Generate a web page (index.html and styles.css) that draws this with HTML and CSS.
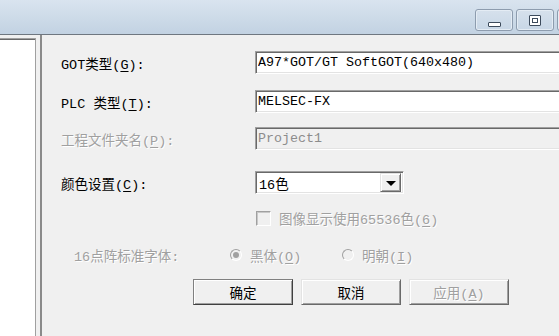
FILE: index.html
```html
<!DOCTYPE html>
<html lang="zh-CN">
<head>
  <meta charset="UTF-8">
  <meta name="viewport" content="width=device-width, initial-scale=1.0">
  <title>工程设置</title>
  <link rel="stylesheet" href="styles.css">
</head>
<body>
  <header class="titlebar">
    <div class="caption-buttons">
      <button class="cap-btn" type="button"><span class="ico-min"></span></button>
      <button class="cap-btn" type="button"><span class="ico-max"></span></button>
      <button class="cap-btn" type="button"></button>
    </div>
  </header>
  <main class="workspace">
    <div class="tree-pane"></div>
    <div class="splitter"></div>
    <form class="dialog">
      <div class="row row-got">
        <label class="label">GOT类型(<u>G</u>):</label>
        <input class="field" value="A97*GOT/GT SoftGOT(640x480)" readonly>
      </div>
      <div class="row row-plc">
        <label class="label">PLC 类型(<u>T</u>):</label>
        <input class="field" value="MELSEC-FX" readonly>
      </div>
      <div class="row row-folder">
        <label class="label disabled">工程文件夹名(<u>P</u>):</label>
        <input class="field field-disabled" value="Project1" disabled>
      </div>
      <div class="row row-color">
        <label class="label">颜色设置(<u>C</u>):</label>
        <div class="combo">
          <span class="combo-text">16色</span>
          <span class="combo-btn"><span class="arrow"></span></span>
        </div>
      </div>
      <div class="row row-check">
        <span class="check"></span>
        <span class="disabled">图像显示使用65536色(<u>6</u>)</span>
      </div>
      <div class="row row-font">
        <span class="label-font disabled">16点阵标准字体:</span>
        <span class="radio checked"></span>
        <span class="disabled radio-text">黑体(<u>O</u>)</span>
        <span class="radio"></span>
        <span class="disabled">明朝(<u>I</u>)</span>
      </div>
      <div class="row row-buttons">
        <button class="btn btn-default" type="button">确定</button>
        <button class="btn" type="button">取消</button>
        <button class="btn disabled" type="button" disabled>应用(<u>A</u>)</button>
      </div>
    </form>
  </main>
</body>
</html>
```

FILE: styles.css
```css
body {
  margin: 0;
  width: 559px;
  height: 336px;
  overflow: hidden;
  background: #f0f0f0;
  font-family: "Liberation Mono", "Noto Sans CJK SC", monospace;
  font-size: 13.5px;
  color: #000;
}
.titlebar {
  height: 34px;
  border-bottom: 1px solid #6f7780;
  background: linear-gradient(#d9e4ef, #c2d2e2);
  display: flex;
  overflow: hidden;
}
.caption-buttons {
  margin-left: auto;
  margin-right: -36px;
  padding-top: 9px;
  display: flex;
  gap: 3px;
}
.cap-btn {
  width: 38px;
  height: 22px;
  padding: 0;
  border: 1px solid #8d9cae;
  border-radius: 3px;
  background: linear-gradient(#d6e1ec, #c8d7e6);
  box-shadow: inset 0 0 0 1px #e4ecf4;
  display: flex;
  align-items: center;
  justify-content: center;
}
.ico-min {
  width: 11px;
  height: 3px;
  margin-top: 8px;
  border: 1px solid #3d4b5c;
  border-radius: 1px;
  background: #fff;
}
.ico-max {
  width: 10px;
  height: 9px;
  border: 1px solid #3d4b5c;
  border-radius: 1px;
  background: #fff;
  position: relative;
}
.ico-max::after {
  content: "";
  position: absolute;
  left: 2px;
  top: 2px;
  width: 4px;
  height: 3px;
  border: 1px solid #3d4b5c;
}
.workspace {
  display: flex;
  height: 301px;
}
.tree-pane {
  flex: none;
  width: 35px;
  margin-top: 3px;
  background: #fff;
  border-top: 1px solid #a0a0a0;
  border-right: 1px solid #a0a0a0;
  box-shadow: inset 0 1px 0 #696969;
}
.splitter {
  flex: none;
  width: 3px;
  margin-left: 1px;
  border-right: 2px solid #8a8a8a;
}
.dialog {
  flex: 1;
  min-width: 0;
  padding: 16px 0 0 19px;
}
.row {
  display: flex;
  align-items: center;
  height: 23px;
}
.row-plc { margin-top: 16px; }
.row-folder { margin-top: 14px; }
.row-color { margin-top: 21px; }
.row-check { height: 16px; margin-top: 16px; padding-left: 194px; gap: 8px; }
.row-font { height: 16px; margin-top: 21px; padding-left: 13px; }
.row-buttons { height: 26px; margin-top: 16px; padding-left: 132px; gap: 8px; }
.label {
  width: 194px;
  flex: none;
}
.disabled {
  color: #a0a0a0;
  text-shadow: 1px 1px 0 #fff;
}
u {
  text-decoration-thickness: 1px;
  text-underline-offset: 2px;
}
.field {
  flex: none;
  width: 330px;
  height: 23px;
  box-sizing: border-box;
  margin: 0;
  padding: 0 0 0 2px;
  font: inherit;
  font-size: 13.33px;
  color: #000;
  background: #fff;
  border: 1px solid;
  border-color: #a0a0a0 #fff #fff #a0a0a0;
  box-shadow: inset 1px 1px 0 #696969, inset -1px -1px 0 #e3e3e3;
  outline: none;
}
.field-disabled {
  background: #f0f0f0;
  color: #8c8c8c;
}
.combo {
  flex: none;
  width: 149px;
  height: 23px;
  box-sizing: border-box;
  display: flex;
  align-items: center;
  background: #fff;
  border: 1px solid;
  border-color: #a0a0a0 #fff #fff #a0a0a0;
  box-shadow: inset 1px 1px 0 #696969, inset -1px -1px 0 #e3e3e3;
  padding: 2px 2px 2px 3px;
}
.combo-text {
  flex: 1;
}
.combo-btn {
  width: 21px;
  height: 19px;
  box-sizing: border-box;
  background: #f0f0f0;
  border: 1px solid;
  border-color: #e3e3e3 #696969 #696969 #e3e3e3;
  box-shadow: inset 1px 1px 0 #fff, inset -1px -1px 0 #a0a0a0;
  display: flex;
  align-items: center;
  justify-content: center;
}
.arrow {
  width: 0;
  height: 0;
  border-left: 5px solid transparent;
  border-right: 5px solid transparent;
  border-top: 5px solid #000;
  margin-top: 1px;
}
.check {
  width: 15px;
  height: 15px;
  box-sizing: border-box;
  flex: none;
  margin-left: 1px;
  background: #f0f0f0;
  border: 1px solid;
  border-color: #a0a0a0 #fff #fff #a0a0a0;
  box-shadow: inset 1px 1px 0 #c8c8c8;
}
.label-font {
  width: 156px;
  flex: none;
}
.radio {
  width: 12px;
  height: 12px;
  box-sizing: border-box;
  flex: none;
  border-radius: 50%;
  border: 1px solid #a0a0a0;
  border-bottom-color: #fff;
  border-right-color: #fff;
  background: #f0f0f0;
  margin-right: 8px;
  position: relative;
}
.radio.checked::after {
  content: "";
  position: absolute;
  left: 2px;
  top: 2px;
  width: 6px;
  height: 6px;
  border-radius: 50%;
  background: #a0a0a0;
}
.radio-text {
  width: 92px;
  flex: none;
}
.btn {
  flex: none;
  width: 100px;
  height: 26px;
  box-sizing: border-box;
  padding: 0;
  font: inherit;
  color: #000;
  background: #f0f0f0;
  border: 1px solid;
  border-color: #e3e3e3 #696969 #696969 #e3e3e3;
  box-shadow: inset 1px 1px 0 #fff, inset -1px -1px 0 #a0a0a0;
}
.btn-default {
  border-color: #808080 #404040 #404040 #808080;
}
.btn.disabled {
  color: #a0a0a0;
}
```
